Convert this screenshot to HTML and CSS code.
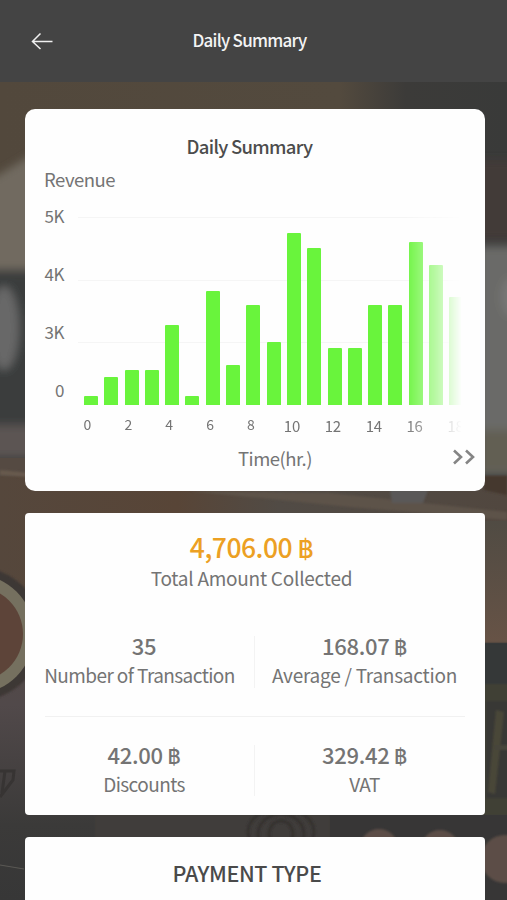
FILE: index.html
```
<!DOCTYPE html>
<html lang="en">
  <head>
    <meta charset="UTF-8">
    <title>Daily Summary</title>
    <link rel="stylesheet" href="styles.css">
  </head>
  <body>
    <!-- darkened cafe backdrop -->
    <svg class="backdrop" viewBox="0 0 507 900" aria-hidden="true">
      <defs>
        <filter id="soft" x="-20%" y="-20%" width="140%" height="140%"><feGaussianBlur stdDeviation="4"/></filter>
        <filter id="edge" x="-20%" y="-20%" width="140%" height="140%"><feGaussianBlur stdDeviation="1"/></filter>
        <linearGradient id="top"><stop offset="0" stop-color="#52483c"/><stop offset=".67" stop-color="#534a3e"/><stop offset=".8" stop-color="#3c3b39"/><stop offset="1" stop-color="#393a39"/></linearGradient>
        <linearGradient id="wood"><stop offset="0" stop-color="#55473c"/><stop offset=".35" stop-color="#584537"/><stop offset=".55" stop-color="#514b45"/><stop offset="1" stop-color="#51473f"/></linearGradient>
        <linearGradient id="floor" x2="0" y2="1"><stop offset="0" stop-color="#544944"/><stop offset=".35" stop-color="#51494a"/><stop offset=".75" stop-color="#3b3a39"/><stop offset="1" stop-color="#373737"/></linearGradient>
        <linearGradient id="side" x2="0" y2="1"><stop offset="0" stop-color="#504b43"/><stop offset="1" stop-color="#675346"/></linearGradient>
      </defs>
      <rect width="507" height="900" fill="#3a3a39"/>
      <rect y="80" width="507" height="170" fill="url(#top)"/>
      <g filter="url(#soft)">
        <path d="M-10 180L40 150V270H-10z" fill="#716a60"/>
        <path d="M-10 273H40V425H-10z" fill="#3b3d3e"/>
        <ellipse cx="4" cy="328" rx="15" ry="42" fill="#686867"/>
        <path d="M-10 425H40V458H-10z" fill="#5b5552"/>
        <path d="M478 160H520V240H478z" fill="#433b37"/>
        <path d="M478 246H520V475H478z" fill="#6b6b68"/>
        <path d="M478 430H520V472H478z" fill="#625f53"/>
        <ellipse cx="510" cy="297" rx="9" ry="19" fill="#777776"/>
      </g>
      <rect y="476" width="507" height="140" fill="url(#wood)"/>
      <path d="M0 458H30V476H0z" fill="#554a42"/>
      <path d="M0 470L30 473V477L0 475z" fill="#675a4e" filter="url(#edge)"/>
      <g filter="url(#edge)">
        <path d="M190 491L330 493L507 512V520L350 507z" fill="#5d5248"/>
        <path d="M390 490H428L423 503H392z" fill="#5a5958"/>
        <path d="M484 476H507V495L484 490z" fill="#45372f"/>
      </g>
      <rect y="600" width="200" height="300" fill="url(#floor)"/>
      <rect x="470" y="521" width="37" height="122" fill="url(#side)"/>
      <g filter="url(#edge)">
        <path d="M470 643H510V684H470z" fill="#363839"/>
        <path d="M470 684H510V815H470z" fill="#403f34"/>
        <path d="M486 701H510V798H486z" fill="#393836"/>
        <path d="M496 710L504 712L495 794L488 792z" fill="#4a4738"/>
        <path d="M495 745H510V750H495z" fill="#47443a"/>
      </g>
      <!-- cup -->
      <circle cx="-24" cy="634" r="67" fill="#3e3735" filter="url(#edge)"/>
      <circle cx="-26" cy="634" r="60" fill="#75705f"/>
      <circle cx="-24" cy="634" r="47" fill="#5d4439"/>
      <g fill="none" stroke="#373433" stroke-width="3">
        <path d="M0 771H14L13 780L0 797M5 771L2 793"/>
        <path d="M0 865L24 869" stroke="#5b5955" stroke-width="1"/>
      </g>
      <rect y="815" x="95" width="235" height="24" fill="#403d3a" filter="url(#edge)"/>
      <g fill="none" stroke="#34312f" stroke-width="3" filter="url(#edge)">
        <ellipse cx="281" cy="832" rx="33" ry="24"/>
        <ellipse cx="281" cy="834" rx="23" ry="20"/>
        <ellipse cx="281" cy="834" rx="12" ry="13"/>
      </g>
      <rect y="815" x="330" width="177" height="85" fill="#373636"/>
      <g fill="#5c4e46" filter="url(#edge)">
        <circle cx="379" cy="848" r="19"/>
        <circle cx="440" cy="849" r="19"/>
        <circle cx="505" cy="859" r="24"/>
      </g>
    </svg>

    <header class="topbar">
      <svg class="back" viewBox="0 0 24 18"><path d="M9.5 1.5L1.5 9.5L9.5 17M1.5 9.5H21.5"/></svg>
      <h1>Daily Summary</h1>
    </header>

    <main>
      <section class="card chart-card">
        <h2>Daily Summary</h2>
        <p class="axis-title">Revenue</p>
        <div class="chart">
          <div class="y-axis"><span>5K</span><span>4K</span><span>3K</span><span>0</span></div>
          <div class="plot">
            <div class="bars">
              <i style="height: 9.5px"></i>
              <i style="height: 28.5px"></i>
              <i style="height: 35px"></i>
              <i style="height: 35px"></i>
              <i style="height: 80px"></i>
              <i style="height: 9.5px"></i>
              <i style="height: 114px"></i>
              <i style="height: 40.5px"></i>
              <i style="height: 100px"></i>
              <i style="height: 63.5px"></i>
              <i style="height: 172px"></i>
              <i style="height: 157px"></i>
              <i style="height: 57px"></i>
              <i style="height: 57px"></i>
              <i style="height: 100px"></i>
              <i style="height: 100px"></i>
              <i style="height: 163.5px"></i>
              <i style="height: 140.5px"></i>
              <i style="height: 108px"></i>
            </div>
            <div class="x-axis">
              <span>0</span><span>2</span><span>4</span><span>6</span><span>8</span>
              <span class="wide">10</span><span class="wide">12</span><span class="wide">14</span><span class="wide">16</span><span class="wide">18</span>
            </div>
          </div>
        </div>
        <div class="chart-foot">
          <span>Time(hr.)</span>
          <svg class="more" viewBox="0 0 24 16"><path d="M2 1.5L9 8L2 14.5M14 1.5L21 8L14 14.5"/></svg>
        </div>
      </section>

      <section class="card totals">
        <div class="total">
          <strong>4,706.00 <b>฿</b></strong>
          <span>Total Amount Collected</span>
        </div>
        <div class="row">
          <div class="stat"><strong>35</strong><span class="tight long">Number of Transaction</span></div>
          <div class="stat"><strong>168.07 <b>฿</b></strong><span>Average / Transaction</span></div>
        </div>
        <div class="row">
          <div class="stat"><strong>42.00 <b>฿</b></strong><span class="tight">Discounts</span></div>
          <div class="stat"><strong>329.42 <b>฿</b></strong><span class="tight">VAT</span></div>
        </div>
      </section>

      <section class="card payment">
        <h2>PAYMENT TYPE</h2>
      </section>
    </main>
  </body>
</html>
```
FILE: styles.css
```
* { box-sizing: border-box; }
html, body { margin: 0; height: 900px; overflow: hidden; }
body { position: relative; background: #3a3a39; color: #747474;
       font-family: "Noto Sans CJK SC", "Noto Sans", sans-serif; }
h1, h2, p { margin: 0; }

.backdrop { position: absolute; top: 0; left: 0; width: 507px; height: 900px; z-index: -1; }

.topbar { display: flex; align-items: center; height: 82px; padding: 0 31px; background: #444; }
.topbar h1 { flex: 1; margin: -2px 32px 0 0; text-align: center; color: #f4f4f4;
             font-size: 17px; font-weight: 500; line-height: 24px; letter-spacing: -.75px; }
.back { width: 24px; height: 18px; fill: none; stroke: #f0f0f0; stroke-width: 1.5; }

main { display: flex; flex-direction: column; gap: 22px; padding: 27px 22px 0 25px; }
.card { background: #fefefe; border-radius: 4px; }

.chart-card { height: 382px; border-radius: 10px; padding-top: 24px; }
.chart-card h2 { margin-right: 11px; text-align: center; color: #4c4c4c;
                 font-size: 18.5px; font-weight: 500; line-height: 26px; letter-spacing: -.7px; }
.axis-title { padding: 7px 0 0 19px; font-size: 18.5px; line-height: 26px; letter-spacing: -.5px; }

.chart { display: flex; height: 253px; padding-top: 12px; }
.y-axis { display: flex; flex-direction: column; gap: 34px; width: 39px; text-align: right;
          font-size: 17px; line-height: 24px; letter-spacing: -.4px; }
.plot { width: 383px; margin-left: 14px; padding-top: 13px;
        -webkit-mask-image: linear-gradient(to right, #000 326px, transparent 384px);
        mask-image: linear-gradient(to right, #000 326px, transparent 384px); }
.bars { display: flex; align-items: flex-end; gap: 6.3px; height: 188px; padding-left: 6px; overflow: hidden;
        background: repeating-linear-gradient(#f5f5f5 0 1px, transparent 1px 62.6px); }
.bars i { flex: none; width: 14px; border-radius: 1px 1px 0 0; background: #69f43c; }
.x-axis { display: flex; margin: 9px 0 0 -11px; font-size: 14px; line-height: 20px; }
.x-axis span { flex: none; width: 40.9px; text-align: center; }
.x-axis .wide { padding-top: 2px; font-size: 15px; letter-spacing: -.3px; }

.chart-foot { display: flex; align-items: center; padding: 0 9px 0 213px;
              font-size: 18.5px; line-height: 26px; letter-spacing: -.5px; }
.more { width: 24px; height: 16px; margin: -2px 0 0 auto; fill: none; stroke: #858585; stroke-width: 2.6; }

.totals { height: 302px; padding: 0 20px; text-align: center; }
.totals strong, .totals span { display: block; }
.totals b { font-family: Inter, "Noto Sans", sans-serif; font-size: .92em; font-weight: 500; line-height: 0; }
.total { height: 95px; padding-top: 17px; margin-right: 7px; }
.total strong { color: #eca023; font-size: 26.5px; font-weight: 500; line-height: 34px; letter-spacing: -.5px; }
.total span, .stat span { font-size: 19px; line-height: 28px; letter-spacing: -.25px; }
.stat .tight { letter-spacing: -.58px; }
.stat .long { margin-left: -9px; }

.row { display: flex; height: 108px; padding: 28px 0; }
.row + .row { border-top: 1px solid #f1f1f1; }
.stat { width: 211px; white-space: nowrap; border: 0 solid #f3f3f3; }
.stat:first-child { padding-right: 11px; border-right-width: 1px; }
.stat:last-child { padding-left: 9px; }
.stat strong { margin-top: -5px; font-size: 22px; font-weight: 500; line-height: 28px; letter-spacing: -.3px; }
.stat span { margin-top: 2px; }

.payment { height: 100px; padding-top: 21px; text-align: center; }
.payment h2 { margin-right: 16px; color: #4a4a4a; font-size: 21.5px; font-weight: 500; line-height: 30px; letter-spacing: -.4px; }
```
